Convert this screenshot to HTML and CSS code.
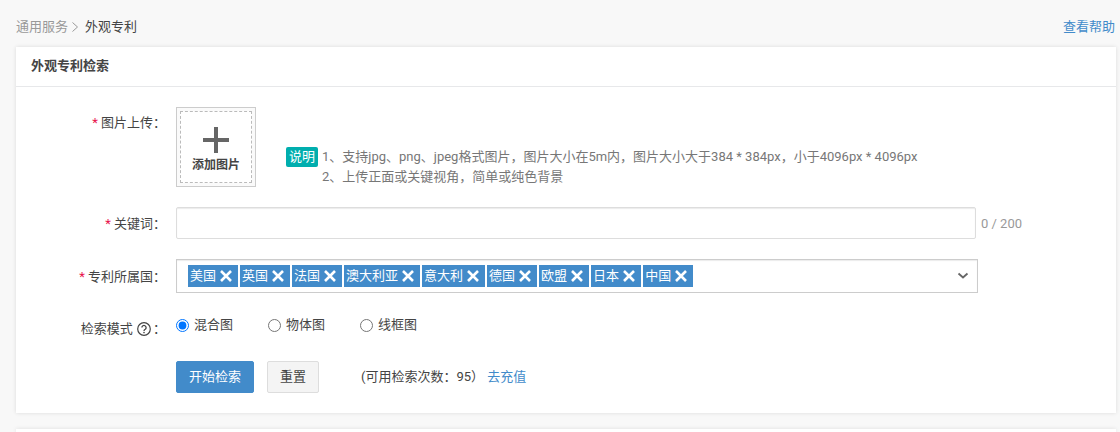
FILE: index.html
```html
<!DOCTYPE html>
<html lang="zh-CN">
<head>
  <meta charset="UTF-8" />
  <meta name="viewport" content="width=device-width, initial-scale=1.0"/>
  <title>外观专利</title>
  <link rel="stylesheet" href="styles.css">
</head>
<body>
  <svg class="sprite" aria-hidden="true">
    <symbol id="icon-close" viewBox="0 0 12 12">
      <path d="M1 1l10 10M11 1L1 11" fill="none" stroke="currentColor" stroke-width="2.6"/>
    </symbol>
  </svg>

  <header class="topbar">
    <nav class="breadcrumb">
      <a href="#services">通用服务</a>
      <svg class="crumb-arrow" viewBox="0 0 6 10"><path d="M.5 .5l5 4.5-5 4.5" fill="none" stroke="currentColor"/></svg>
      <span>外观专利</span>
    </nav>
    <a class="link" href="#help">查看帮助</a>
  </header>

  <main class="panel">
    <h2 class="panel-title">外观专利检索</h2>

    <form class="search-form">
      <!-- Image upload -->
      <div class="row row-upload">
        <label class="row-label" for="upload"><i>*</i> 图片上传：</label>
        <button type="button" class="upload" id="upload">
          <span class="upload-inner">
            <svg class="upload-plus" viewBox="0 0 26 26"><path d="M13 0v26M0 13h26" stroke="currentColor" stroke-width="4"/></svg>
            <span>添加图片</span>
          </span>
        </button>
        <div class="notes">
          <span class="badge">说明</span>
          <ol>
            <li>1、支持jpg、png、jpeg格式图片，图片大小在5m内，图片大小大于384 * 384px，小于4096px * 4096px</li>
            <li>2、上传正面或关键视角，简单或纯色背景</li>
          </ol>
        </div>
      </div>

      <!-- Keyword -->
      <div class="row row-keyword">
        <label class="row-label" for="keyword"><i>*</i> 关键词：</label>
        <input type="text" class="keyword" id="keyword" maxlength="200">
        <span class="counter">0 / 200</span>
      </div>

      <!-- Countries -->
      <div class="row row-country">
        <span class="row-label" id="countryLabel"><i>*</i> 专利所属国：</span>
        <div class="multi-select" role="group" aria-labelledby="countryLabel">
          <ul class="tags">
            <li>美国<button type="button" aria-label="移除美国"><svg><use href="#icon-close"/></svg></button></li>
            <li>英国<button type="button" aria-label="移除英国"><svg><use href="#icon-close"/></svg></button></li>
            <li>法国<button type="button" aria-label="移除法国"><svg><use href="#icon-close"/></svg></button></li>
            <li>澳大利亚<button type="button" aria-label="移除澳大利亚"><svg><use href="#icon-close"/></svg></button></li>
            <li>意大利<button type="button" aria-label="移除意大利"><svg><use href="#icon-close"/></svg></button></li>
            <li>德国<button type="button" aria-label="移除德国"><svg><use href="#icon-close"/></svg></button></li>
            <li>欧盟<button type="button" aria-label="移除欧盟"><svg><use href="#icon-close"/></svg></button></li>
            <li>日本<button type="button" aria-label="移除日本"><svg><use href="#icon-close"/></svg></button></li>
            <li>中国<button type="button" aria-label="移除中国"><svg><use href="#icon-close"/></svg></button></li>
          </ul>
          <button type="button" class="select-arrow" aria-label="展开">
            <svg viewBox="0 0 12 8"><path d="M1.5 1.5L6 5.5l4.500-4" fill="none" stroke="currentColor" stroke-width="1.8"/></svg>
          </button>
        </div>
      </div>

      <!-- Search mode -->
      <div class="row row-mode">
        <span class="row-label" id="modeLabel">检索模式
          <svg class="help-icon" viewBox="0 0 14 14"><circle cx="7" cy="7" r="6.3" fill="none" stroke="currentColor" stroke-width="1.2"/><path d="M4.900 5.600a2.100 2.100 0 1 1 3.300 1.700C7.400 7.800 7 8.100 7 9" fill="none" stroke="currentColor" stroke-width="1.3"/><circle cx="7" cy="10.600" r=".8" fill="currentColor"/></svg>：</span>
        <div class="radios" role="radiogroup" aria-labelledby="modeLabel">
          <label><input type="radio" name="mode" value="mix" checked>混合图</label>
          <label><input type="radio" name="mode" value="object">物体图</label>
          <label><input type="radio" name="mode" value="line">线框图</label>
        </div>
      </div>

      <div class="row row-actions">
        <button type="button" class="btn btn-primary">开始检索</button>
        <button type="reset" class="btn">重置</button>
        <p class="quota">(可用检索次数：95） <a class="link" href="#recharge">去充值</a></p>
      </div>
    </form>
  </main>

  <section class="panel panel-result"></section>
</body>
</html>
```

FILE: styles.css
```css
* {
  box-sizing: border-box;
}

body {
  display: flex;
  flex-direction: column;
  min-height: 100vh;
  margin: 0;
  padding: 0 4px 0 16px;
  background: #f8f8f8;
  color: #444;
  font: 13px/20px Roboto, "Noto Sans CJK SC", sans-serif;
}

button, input {
  margin: 0;
  padding: 0;
  font: inherit;
  color: inherit;
}

button {
  cursor: pointer;
}

ol, ul, p {
  margin: 0;
  padding: 0;
  list-style: none;
}

.sprite {
  display: none;
}

.link {
  color: #428bca;
  text-decoration: none;
}

/* Top bar */
.topbar {
  display: flex;
  justify-content: space-between;
  padding: 17px 1px 10px 0;
}

.breadcrumb {
  display: flex;
  align-items: center;
}

.breadcrumb a {
  color: #999;
  text-decoration: none;
}

.crumb-arrow {
  width: 6px;
  height: 10px;
  margin: 0 7px 0 4px;
  color: #999;
}

/* Panel */
.panel {
  background: #fff;
  box-shadow: 0 0 4px rgba(0, 0, 0, 0.12);
}

.panel-title {
  margin: 0;
  padding: 9px 15px 10px;
  border-bottom: 1px solid #e7e8ea;
  font-size: 13px;
  font-weight: bold;
}

.panel-result {
  flex: 1;
  margin-top: 16px;
}

/* Form rows */
.search-form {
  padding: 20px 0;
}

.row {
  display: flex;
  align-items: center;
  margin-bottom: 20px;
}

.row-label {
  flex: none;
  width: 150px;
  margin-right: 10px;
  padding-top: 2px;
  text-align: right;
}

.row-label i {
  color: #e8114b;
  font-style: normal;
}

.row-upload {
  align-items: flex-start;
}

.row-upload .row-label {
  padding-top: 6px;
}

.upload {
  flex: none;
  width: 80px;
  height: 80px;
  padding: 3px;
  border: 1px solid #ccc;
  background: #fafafa;
}

.upload-inner {
  display: flex;
  flex-direction: column;
  align-items: center;
  height: 100%;
  padding-top: 15px;
  border: 1px dashed #bbb;
  background: #fff;
  font-size: 12px;
  font-weight: bold;
  line-height: 24px;
}

.upload-plus {
  width: 26px;
  height: 26px;
  color: #666;
}

.notes {
  display: flex;
  align-items: flex-start;
  gap: 4px;
  margin: 40px 0 0 30px;
  color: #777;
}

.badge {
  flex: none;
  padding: 0 3px;
  border-radius: 2px;
  background: #00aeae;
  color: #fff;
}

.keyword {
  flex: 0 1 800px;
  min-width: 0;
  height: 32px;
  padding: 0 8px;
  border: 1px solid #ddd;
  border-radius: 2px;
  box-shadow: inset 0 1px 1px rgba(0, 0, 0, 0.08);
}

.counter {
  flex: none;
  margin-left: 5px;
  padding-top: 2px;
  color: #999;
}

.multi-select {
  display: flex;
  align-items: center;
  flex: 0 1 802px;
  min-width: 0;
  padding: 5px 8px 5px 11px;
  border: 1px solid #ccc;
  box-shadow: inset 0 1px 1px rgba(0, 0, 0, 0.08);
}

.tags {
  display: flex;
  flex-wrap: wrap;
  flex: 1;
  gap: 2px;
}

.tags li {
  display: flex;
  align-items: center;
  height: 22px;
  padding: 0 6px 0 2px;
  background: #428bca;
  color: #fff;
}

.tags button {
  display: flex;
  margin-left: 4px;
  border: 0;
  background: none;
}

.tags svg {
  width: 12px;
  height: 12px;
}

.select-arrow {
  display: flex;
  border: 0;
  background: none;
  color: #666;
}

.select-arrow svg {
  width: 12px;
  height: 8px;
}

.row-mode {
  align-items: flex-start;
  min-height: 28px;
}

.row-mode .row-label {
  padding-top: 6px;
}

.help-icon {
  width: 14px;
  height: 14px;
  margin: 0 2px 0 1px;
  vertical-align: -3px;
}

.radios {
  display: flex;
  gap: 35px;
  padding-top: 2px;
}

.radios label {
  display: flex;
  align-items: center;
  gap: 5px;
}

.radios input {
  width: 13px;
  height: 13px;
}

.row-actions {
  margin-bottom: 0;
  padding-left: 160px;
}

.btn {
  height: 32px;
  margin-right: 13px;
  padding: 0 12px;
  border: 1px solid #ddd;
  border-radius: 2px;
  background: #f4f4f4;
}

.btn-primary {
  border-color: #428bca;
  background: #428bca;
  color: #fff;
}

.quota {
  margin-left: 29px;
}
```
